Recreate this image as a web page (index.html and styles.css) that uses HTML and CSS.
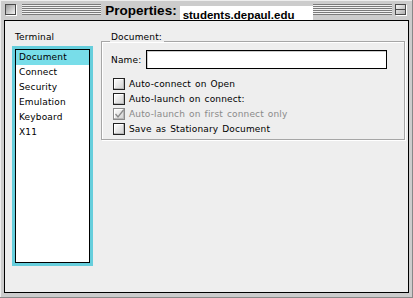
FILE: index.html
```html
<!DOCTYPE html>
<html lang="en">
<head>
    <meta charset="UTF-8">
    <title>Properties: students.depaul.edu</title>
    <link rel="stylesheet" href="styles.css">
</head>
<body>
    <div class="window">
        <div class="titlebar">
            <span class="close-box"></span>
            <span class="stripes"></span>
            <span class="title">Properties:</span>
            <span class="title-field">students.depaul.edu</span>
            <span class="stripes"></span>
            <span class="shade-box"></span>
        </div>

        <div class="frame">
            <div class="sidebar">
                <div class="caption">Terminal</div>
                <div class="list-focus">
                    <ul class="list">
                        <li class="selected">Document</li>
                        <li>Connect</li>
                        <li>Security</li>
                        <li>Emulation</li>
                        <li>Keyboard</li>
                        <li>X11</li>
                    </ul>
                </div>
            </div>

            <fieldset class="group">
                <legend>Document:</legend>
                <div class="name-row">
                    <label for="doc-name">Name:</label>
                    <input type="text" id="doc-name">
                </div>
                <div class="checks">
                    <div class="check"><span class="box"></span>Auto-connect on Open</div>
                    <div class="check"><span class="box"></span>Auto-launch on connect:</div>
                    <div class="check disabled">
                        <span class="box">
                            <svg width="10" height="10" viewBox="0 0 10 10"><path d="M1.5 5 L4 8 L9.5 1" fill="none" stroke="#8a8a8a" stroke-width="1.3"/></svg>
                        </span>Auto-launch on first connect only
                    </div>
                    <div class="check"><span class="box"></span>Save as Stationary Document</div>
                </div>
            </fieldset>
        </div>
    </div>
</body>
</html>
```

FILE: styles.css
```css
html, body {
    margin: 0;
    padding: 0;
}

body {
    font-family: 'DejaVu Sans', sans-serif;
    font-size: 9px;
    letter-spacing: 0.15px;
    word-spacing: 1px;
    color: #000;
    background-color: #cccccc;
}

.window {
    width: 413px;
    height: 298px;
    box-sizing: border-box;
    padding: 0 4px 5px 4px;
    display: flex;
    flex-direction: column;
    background-color: #cccccc;
    box-shadow: inset -1px -1px 0 #888888, inset 1px 1px 0 #eeeeee;
}

/* title bar */
.titlebar {
    height: 20px;
    display: flex;
    align-items: flex-start;
    padding: 0 3px 0 1px;
    letter-spacing: 0;
    word-spacing: 0;
}

.close-box,
.shade-box {
    width: 11px;
    height: 11px;
    margin-top: 4px;
    box-sizing: border-box;
    border: 1px solid #4a4a4a;
    background: linear-gradient(135deg, #9a9a9a, #f4f4f4);
    box-shadow: 1px 1px 0 #ffffff;
}

.close-box {
    margin-right: 6px;
}

.shade-box {
    margin-left: 3px;
    background: linear-gradient(#4a4a4a, #4a4a4a) center / 100% 1px no-repeat, linear-gradient(135deg, #f4f4f4, #b0b0b0);
}

.stripes {
    flex: 1;
    height: 11px;
    margin-top: 4px;
    background: repeating-linear-gradient(#7a7a7a 0 1px, #f0f0f0 1px 2px);
}

.title {
    font-family: 'Liberation Sans', sans-serif;
    font-weight: bold;
    font-size: 13.5px;
    line-height: 16px;
    margin: 3px 3px 0 4px;
}

.title-field {
    width: 133px;
    height: 14px;
    margin-top: 6px;
    box-sizing: border-box;
    padding-left: 3px;
    background-color: #ffffff;
    font-family: 'Liberation Sans', sans-serif;
    font-weight: bold;
    font-size: 11.5px;
    line-height: 18px;
    white-space: nowrap;
}

/* content frame */
.frame {
    flex: 1;
    display: flex;
    align-items: flex-start;
    gap: 8px;
    padding: 11px 3px 0 7px;
    border: 1px solid #000000;
    background-color: #eeeeee;
}

.sidebar {
    width: 81px;
}

.caption {
    line-height: 11px;
    padding-left: 3px;
    margin-bottom: 3px;
}

.list-focus {
    border: 3px solid #66cedc;
}

.list {
    list-style: none;
    margin: 0;
    padding: 0;
    height: 212px;
    border: 1px solid #000000;
    background-color: #ffffff;
}

.list li {
    height: 15px;
    line-height: 15px;
    padding-left: 3px;
}

.list li.selected {
    background-color: #78dde9;
}

/* group box */
.group {
    flex: 1;
    margin: 0;
    padding: 0 17px 3px 9px;
    border: 1px solid #a6a6a6;
    box-shadow: 1px 1px 0 #ffffff, inset 1px 1px 0 #ffffff;
    min-width: 0;
}

.group legend {
    padding: 0 2px 7px 1px;
    line-height: 11px;
    margin-left: -1px;
}

.name-row {
    display: flex;
    align-items: center;
    gap: 5px;
}

.name-row input {
    flex: 1;
    height: 19px;
    box-sizing: border-box;
    margin: 0;
    border: 1px solid #000000;
    background-color: #ffffff;
    box-shadow: inset 1px 1px 0 #cccccc;
    padding: 0 3px;
    font-family: 'DejaVu Sans', sans-serif;
    font-size: 9px;
    outline: none;
}

.checks {
    margin-top: 7px;
}

.check {
    display: flex;
    align-items: center;
    height: 15px;
    gap: 4px;
}

.box {
    width: 12px;
    height: 12px;
    margin-left: 2px;
    box-sizing: border-box;
    border: 1px solid #222222;
    background: linear-gradient(135deg, #ffffff, #cfcfcf);
    box-shadow: inset -1px -1px 0 #b8b8b8, inset 1px 1px 0 #ffffff;
    display: flex;
    align-items: center;
    justify-content: center;
}

.check.disabled {
    color: #8a8a8a;
}

.check.disabled .box {
    border-color: #8a8a8a;
}
```
